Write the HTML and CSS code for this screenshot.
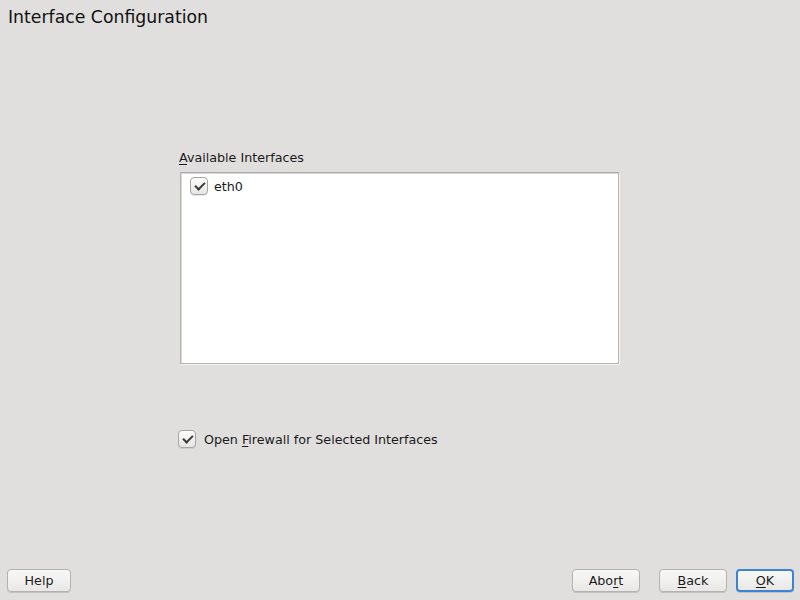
FILE: index.html
```html
<!DOCTYPE html>
<html lang="en">
<head>
<meta charset="UTF-8">
<title>Interface Configuration</title>
<link rel="stylesheet" href="styles.css">
</head>
<body>

<div class="window">

  <h1 class="title">Interface Configuration</h1>

  <div class="content">
    <div class="ifaces">
      <div class="label"><u>A</u>vailable Interfaces</div>
      <div class="listbox">
        <div class="item">
          <span class="check checked"></span>
          <span>eth0</span>
        </div>
      </div>
    </div>

    <div class="firewall">
      <span class="check checked"></span>
      <span>Open <u>F</u>irewall for Selected Interfaces</span>
    </div>
  </div>

  <div class="buttons">
    <button class="btn btn-help">Help</button>
    <div class="spacer"></div>
    <button class="btn btn-abort">Abo<u>r</u>t</button>
    <button class="btn btn-back"><u>B</u>ack</button>
    <button class="btn btn-ok default"><u>O</u>K</button>
  </div>

</div>

</body>
</html>
```

FILE: styles.css
```css
html, body {
  margin: 0;
  padding: 0;
  height: 100%;
}

body {
  background-color: #e0dfde;
  font-family: "DejaVu Sans", sans-serif;
  font-size: 12.7px;
  color: #1a1a1a;
}

u {
  text-decoration: underline;
  text-underline-offset: 2px;
}

.window {
  height: 600px;
  display: flex;
  flex-direction: column;
}

.title {
  margin: 0;
  padding: 6px 0 0 8px;
  font-size: 17.3px;
  font-weight: normal;
  line-height: 22px;
  color: #111;
}

.content {
  flex: 1;
  padding-left: 178px;
}

.ifaces {
  margin-top: 122px;
  width: 441px;
}

.label {
  padding-left: 1px;
  line-height: 16px;
  margin-bottom: 6px;
}

.listbox {
  box-sizing: border-box;
  margin-left: 2px;
  height: 192px;
  background: #fff;
  border: 1px solid #b5b4b2;
  border-top-color: #a9a8a6;
  box-shadow: inset 1px 1px 0 #d8d8d8, 1px 1px 0 #f4f4f3;
  padding: 4px 0 0 9px;
}

.item {
  display: flex;
  align-items: center;
  gap: 6px;
  height: 18px;
}

.check {
  display: inline-block;
  box-sizing: border-box;
  width: 18px;
  height: 18px;
  border: 1px solid #a6a5a3;
  border-radius: 4px;
  background: linear-gradient(#fdfdfd, #e6e5e4);
  box-shadow: 0 1px 0 rgba(0, 0, 0, 0.08);
  position: relative;
  flex: none;
}

.check.checked::after {
  content: "";
  position: absolute;
  left: 4px;
  top: 4px;
  width: 8px;
  height: 4px;
  border-left: 2px solid #3a3a3a;
  border-bottom: 2px solid #3a3a3a;
  transform: rotate(-45deg);
}

.firewall {
  margin-top: 65px;
  display: flex;
  align-items: center;
  gap: 8px;
  height: 20px;
}

.buttons {
  display: flex;
  align-items: center;
  padding: 0 6px 8px 7px;
  gap: 18px;
}

.spacer {
  flex: 1;
}

.btn {
  height: 23px;
  padding: 0;
  font-family: "DejaVu Sans", sans-serif;
  font-size: 12.7px;
  color: #1a1a1a;
  background: linear-gradient(#f8f8f7, #e9e8e7);
  border: 1px solid #b3b2b0;
  border-radius: 4px;
  box-shadow: 0 1px 0 rgba(0, 0, 0, 0.12);
}

.btn-help {
  width: 64px;
}

.btn-abort {
  width: 68px;
  margin-right: 1px;
}

.btn-back {
  width: 68px;
}

.btn-ok {
  width: 58px;
  margin-left: -9px;
}

.default {
  border: 2px solid #3c83d8;
}
```
